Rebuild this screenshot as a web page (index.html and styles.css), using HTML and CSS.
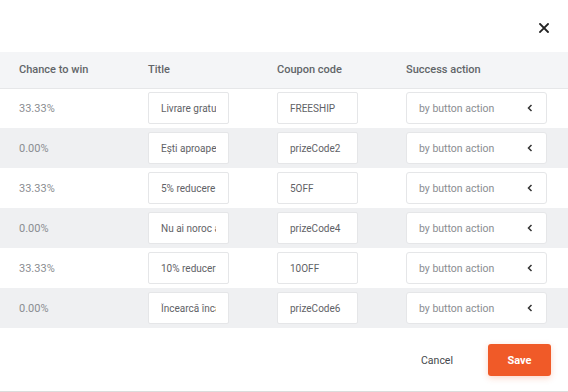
FILE: index.html
```html
<!DOCTYPE html>
<html lang="ro">
<head>
    <meta charset="UTF-8">
    <meta name="viewport" content="width=device-width, initial-scale=1.0">
    <title>Prize settings</title>
    <link rel="stylesheet" href="styles.css">
</head>
<body>
    <div class="modal">
        <div class="modal-top">
            <button class="close" aria-label="Close">
                <svg width="10" height="10" viewBox="0 0 10 10"><path d="M1 1 L9 9 M9 1 L1 9" stroke="#222" stroke-width="1.8" stroke-linecap="square"/></svg>
            </button>
        </div>

        <table class="prizes">
            <colgroup>
                <col class="col-chance">
                <col class="col-title">
                <col class="col-code">
                <col>
            </colgroup>
            <thead>
                <tr>
                    <th>Chance to win</th>
                    <th>Title</th>
                    <th>Coupon code</th>
                    <th>Success action</th>
                </tr>
            </thead>
            <tbody>
                <tr>
                    <td class="chance">33.33%</td>
                    <td><input class="field" value="Livrare gratuită"></td>
                    <td><input class="field" value="FREESHIP"></td>
                    <td><div class="select">by button action <svg width="6" height="8" viewBox="0 0 6 8"><path d="M4.5 1 L1.5 4 L4.5 7" fill="none" stroke="#333" stroke-width="1.5"/></svg></div></td>
                </tr>
                <tr>
                    <td class="chance">0.00%</td>
                    <td><input class="field" value="Ești aproape"></td>
                    <td><input class="field" value="prizeCode2"></td>
                    <td><div class="select">by button action <svg width="6" height="8" viewBox="0 0 6 8"><path d="M4.5 1 L1.5 4 L4.5 7" fill="none" stroke="#333" stroke-width="1.5"/></svg></div></td>
                </tr>
                <tr>
                    <td class="chance">33.33%</td>
                    <td><input class="field" value="5% reducere"></td>
                    <td><input class="field" value="5OFF"></td>
                    <td><div class="select">by button action <svg width="6" height="8" viewBox="0 0 6 8"><path d="M4.5 1 L1.5 4 L4.5 7" fill="none" stroke="#333" stroke-width="1.5"/></svg></div></td>
                </tr>
                <tr>
                    <td class="chance">0.00%</td>
                    <td><input class="field" value="Nu ai noroc azi"></td>
                    <td><input class="field" value="prizeCode4"></td>
                    <td><div class="select">by button action <svg width="6" height="8" viewBox="0 0 6 8"><path d="M4.5 1 L1.5 4 L4.5 7" fill="none" stroke="#333" stroke-width="1.5"/></svg></div></td>
                </tr>
                <tr>
                    <td class="chance">33.33%</td>
                    <td><input class="field" value="10% reducere"></td>
                    <td><input class="field" value="10OFF"></td>
                    <td><div class="select">by button action <svg width="6" height="8" viewBox="0 0 6 8"><path d="M4.5 1 L1.5 4 L4.5 7" fill="none" stroke="#333" stroke-width="1.5"/></svg></div></td>
                </tr>
                <tr>
                    <td class="chance">0.00%</td>
                    <td><input class="field" value="Încearcă încă o dată"></td>
                    <td><input class="field" value="prizeCode6"></td>
                    <td><div class="select">by button action <svg width="6" height="8" viewBox="0 0 6 8"><path d="M4.5 1 L1.5 4 L4.5 7" fill="none" stroke="#333" stroke-width="1.5"/></svg></div></td>
                </tr>
            </tbody>
        </table>

        <div class="modal-footer">
            <button class="btn-cancel">Cancel</button>
            <button class="btn-save">Save</button>
        </div>
    </div>
</body>
</html>
```

FILE: styles.css
```css
* {
    margin: 0;
    padding: 0;
    box-sizing: border-box;
}
body {
    font-family: Roboto, "Liberation Sans", sans-serif;
    background: #fff;
    width: 568px;
    height: 392px;
    overflow: hidden;
}

/* Modal */
.modal {
    background: #fff;
    border-bottom: 1px solid #dcdcdc;
    height: 392px;
}
.modal-top {
    height: 52px;
    display: flex;
    justify-content: flex-end;
    align-items: center;
    padding-right: 19px;
    padding-top: 4px;
}
.close {
    border: none;
    background: none;
    width: 10px;
    height: 10px;
    display: flex;
    cursor: pointer;
}

/* Prize table */
.prizes {
    width: 100%;
    border-collapse: collapse;
    table-layout: fixed;
}
.col-chance,
.col-title,
.col-code {
    width: 129px;
}
.prizes th {
    height: 36px;
    background: #f4f5f7;
    border-bottom: 1px solid #e6e7e9;
    text-align: left;
    font-size: 11px;
    font-weight: 500;
    color: #626569;
    padding: 0 0 0 19px;
}
.prizes td {
    height: 40px;
    padding: 0 0 0 19px;
    vertical-align: middle;
}
.prizes tbody tr:nth-child(even) {
    background: #eff0f2;
}
.chance {
    font-size: 11px;
    color: #8a8d91;
}

/* Inputs */
.field {
    display: block;
    width: 81px;
    height: 32px;
    border: 1px solid #e5e6e8;
    border-radius: 2px;
    background: #fff;
    padding: 0 12px;
    font-family: inherit;
    font-size: 10px;
    color: #5f6266;
    outline: none;
}
.select {
    width: 141px;
    height: 32px;
    border: 1px solid #e5e6e8;
    border-radius: 3px;
    background: #fff;
    padding: 0 13px 0 12px;
    display: flex;
    align-items: center;
    justify-content: space-between;
    font-size: 10.5px;
    color: #8a8d91;
}

/* Footer */
.modal-footer {
    display: flex;
    justify-content: flex-end;
    align-items: center;
    gap: 35px;
    padding: 16px 17px 0 0;
}
.btn-cancel {
    border: none;
    background: none;
    font-family: inherit;
    font-size: 10.5px;
    color: #45484c;
    cursor: pointer;
}
.btn-save {
    width: 63px;
    height: 32px;
    border: none;
    border-radius: 3px;
    background: #f05a28;
    color: #fff;
    font-family: inherit;
    font-size: 11px;
    font-weight: 700;
    cursor: pointer;
    box-shadow: 0 2px 6px rgba(240, 90, 40, 0.25);
}
```
